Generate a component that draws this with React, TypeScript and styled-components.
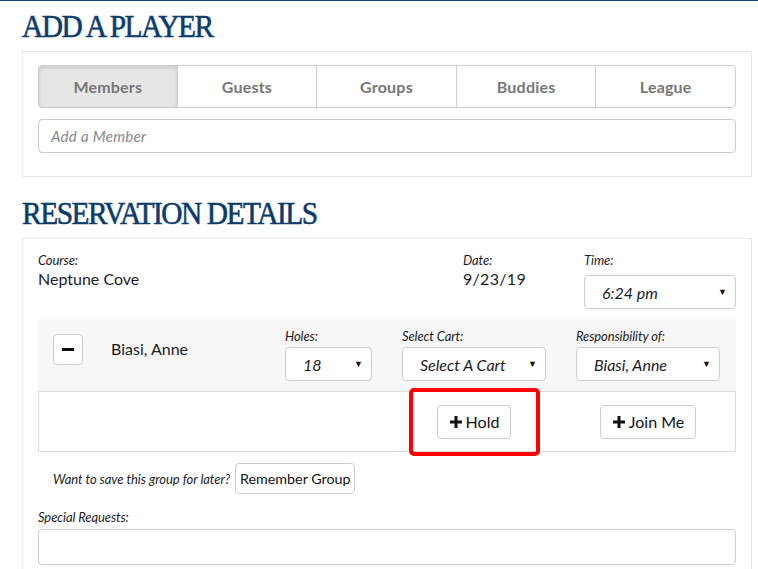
import React from "react";
import styled, {createGlobalStyle} from "styled-components";

const GlobalStyle = createGlobalStyle`
  html, body {
    margin: 0;
    padding: 0;
    background: #fff;
  }
  body {
    font-family: Lato, "Open Sans", sans-serif;
    font-size: 16px;
    color: #1c1c24;
  }
`;

const tabs = ["Members", "Guests", "Groups", "Buddies", "League"];

const Page = styled.div`
  border-top: 1px solid #0d4a7a;
  padding: 0 6px 0 22px;
  width: 758px;
  box-sizing: border-box;
`;

const Heading = styled.h2<{ $top: number }>`
  margin: ${p => p.$top}px 0 0;
  font-family: "Liberation Serif", "Times New Roman", serif;
  font-weight: normal;
  font-size: 32px;
  line-height: 34px;
  letter-spacing: -1.6px;
  color: #0b3c6e;
  height: 34px;
  transform: scaleX(0.92);
  transform-origin: left center;
  -webkit-text-stroke: 0.6px #0b3c6e;
`;

const Card = styled.section<{ $top: number }>`
  margin-top: ${p => p.$top}px;
  border: 1px solid #e6e6e6;
  padding: 13px 15px 23px;
  position: relative;
`;

const TabBar = styled.div`
  display: grid;
  grid-template-columns: repeat(5, 1fr);
  height: 43px;
`;

const Tab = styled.button<{ $active?: boolean }>`
  font-family: Lato, sans-serif;
  font-weight: bold;
  font-size: 16px;
  letter-spacing: 0.2px;
  color: #777;
  background: ${p => (p.$active ? "#e6e6e6" : "#fff")};
  box-shadow: ${p => (p.$active ? "inset 0 2px 4px rgba(0,0,0,0.12)" : "none")};
  border: 1px solid #ccc;
  margin-left: -1px;
  padding: 0;
  &:first-child {
    margin-left: 0;
    border-radius: 4px 0 0 4px;
  }
  &:last-child {
    border-radius: 0 4px 4px 0;
  }
`;

const TextInput = styled.div`
  margin-top: 11px;
  height: 34px;
  box-sizing: border-box;
  border: 1px solid #ccc;
  border-radius: 4px;
  padding: 0 12px;
  display: flex;
  align-items: center;
  font-style: italic;
  font-size: 15px;
  color: #888;
  letter-spacing: 0.3px;
`;

const InfoRow = styled.div`
  display: grid;
  grid-template-columns: 425px 121px 152px;
`;

const Field = styled.div`
  display: flex;
  flex-direction: column;
`;

const Label = styled.div`
  font-style: italic;
  font-size: 13px;
  line-height: 17px;
  color: #1c1c24;
  letter-spacing: -0.1px;
`;

const Value = styled.div<{ $spaced?: boolean }>`
  font-size: 16px;
  line-height: 20px;
  letter-spacing: ${p => (p.$spaced ? "0.3px" : "0")};
`;

const SelectBox = styled.div<{ $width?: number; $gap?: number }>`
  width: ${p => (p.$width ? `${p.$width}px` : "100%")};
  height: 34px;
  box-sizing: border-box;
  border: 1px solid #ccc;
  border-radius: 4px;
  background: #fff;
  display: flex;
  align-items: center;
  justify-content: space-between;
  padding: 0 8px 0 17px;
  font-style: italic;
  font-size: 16px;
  color: #1c1c24;
  margin-top: ${p => p.$gap ?? 2}px;
`;

const Arrow = styled.span`
  font-size: 9px;
  font-style: normal;
  color: #111;
  margin-top: -2px;
`;

const PlayerRow = styled.div`
  margin-top: 10px;
  background: #f7f7f7;
  height: 72px;
  box-sizing: border-box;
  padding: 9px 16px 0 15px;
  display: grid;
  grid-template-columns: 58px 174px 117px 174px 144px;
  align-items: start;
`;

const Column = styled.div`
  display: flex;
  flex-direction: column;
`;

const SmallButton = styled.button`
  font-family: Lato, sans-serif;
  background: #fff;
  border: 1px solid #ccc;
  border-radius: 4px;
  color: #111;
  font-size: 16px;
  display: inline-flex;
  align-items: center;
  justify-content: center;
  gap: 3px;
  padding: 0;
  cursor: pointer;
`;

const MinusButton = styled(SmallButton)`
  width: 30px;
  height: 31px;
  margin-top: 6px;
`;

const MinusBar = styled.span`
  width: 12px;
  height: 3px;
  background: #111;
`;

const Name = styled.div`
  font-size: 16px;
  line-height: 20px;
  margin-top: 11px;
  white-space: nowrap;
`;

const ActionRow = styled.div`
  height: 61px;
  box-sizing: border-box;
  border: 1px solid #ddd;
  display: grid;
  grid-template-columns: 363px 144px 30px 144px;
  align-items: center;
`;

const ActionButton = styled(SmallButton)<{ $width: number }>`
  width: ${p => p.$width}px;
  height: 34px;
  justify-self: center;
`;

const Highlight = styled.div`
  position: absolute;
  left: 386px;
  top: 149px;
  width: 131px;
  height: 68px;
  box-sizing: border-box;
  border: 4px solid #ff0000;
  border-radius: 5px;
  pointer-events: none;
`;

const SaveRow = styled.div`
  display: flex;
  align-items: center;
  padding-left: 15px;
  margin-top: 11px;
  gap: 5px;
`;

const SaveText = styled.span`
  font-style: italic;
  font-size: 13px;
  letter-spacing: -0.05px;
`;

const RememberButton = styled(SmallButton)`
  width: 120px;
  height: 31px;
  font-size: 14.3px;
`;

const Requests = styled.div`
  margin-top: 15px;
`;

const TextArea = styled.div`
  margin-top: 3px;
  height: 34px;
  border: 1px solid #ccc;
  border-radius: 4px;
`;

const PlusIcon = () => (
  <svg width="14" height="14" viewBox="0 0 14 14">
    <path d="M7 1v12M1 7h12" stroke="#111" strokeWidth="3"/>
  </svg>
);

export default function App() {
  return (
    <>
      <GlobalStyle/>
      <Page>
        <Heading $top={8}>ADD A PLAYER</Heading>
        <Card $top={8}>
          <TabBar>
            {tabs.map((t, i) => (
              <Tab key={t} $active={i === 0}>{t}</Tab>
            ))}
          </TabBar>
          <TextInput>Add a Member</TextInput>
        </Card>

        <Heading $top={19}>RESERVATION DETAILS</Heading>
        <Card $top={8}>
          <InfoRow>
            <Field>
              <Label>Course:</Label>
              <Value>Neptune Cove</Value>
            </Field>
            <Field>
              <Label>Date:</Label>
              <Value $spaced>9/23/19</Value>
            </Field>
            <Field>
              <Label>Time:</Label>
              <SelectBox $gap={6}>6:24 pm<Arrow>▼</Arrow></SelectBox>
            </Field>
          </InfoRow>

          <PlayerRow>
            <Column>
              <MinusButton><MinusBar/></MinusButton>
            </Column>
            <Name>Biasi, Anne</Name>
            <Column>
              <Label>Holes:</Label>
              <SelectBox $width={87}>18<Arrow>▼</Arrow></SelectBox>
            </Column>
            <Column>
              <Label>Select Cart:</Label>
              <SelectBox $width={144}>Select A Cart<Arrow>▼</Arrow></SelectBox>
            </Column>
            <Column>
              <Label>Responsibility of:</Label>
              <SelectBox $width={144}>Biasi, Anne<Arrow>▼</Arrow></SelectBox>
            </Column>
          </PlayerRow>

          <ActionRow>
            <span/>
            <ActionButton $width={74}><PlusIcon/>Hold</ActionButton>
            <span/>
            <ActionButton $width={96}><PlusIcon/>Join Me</ActionButton>
          </ActionRow>
          <Highlight/>

          <SaveRow>
            <SaveText>Want to save this group for later?</SaveText>
            <RememberButton>Remember Group</RememberButton>
          </SaveRow>

          <Requests>
            <Label>Special Requests:</Label>
            <TextArea/>
          </Requests>
        </Card>
      </Page>
    </>
  );
}
